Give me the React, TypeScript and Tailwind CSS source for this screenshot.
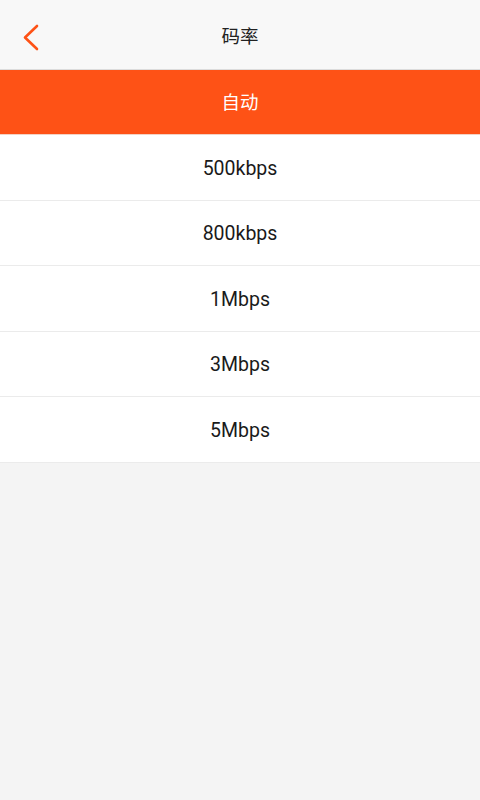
import React from "react";

const items = ["500kbps", "800kbps", "1Mbps", "3Mbps", "5Mbps"];

export default function App() {
  return (
    <div
      className="w-[480px] h-[800px] bg-[#f4f4f4] flex flex-col"
      style={{ fontFamily: 'Roboto, "Noto Sans CJK SC", sans-serif' }}
    >
      <div className="relative h-[70px] bg-[#f8f8f8] border-b border-[#dcdcdc] flex items-center justify-center shrink-0">
        <svg
          className="absolute left-[20px] top-[22px]"
          width="24"
          height="30"
          viewBox="0 0 24 30"
          fill="none"
        >
          <path
            d="M17 4 L5 15.5 L17 27"
            stroke="#fe5216"
            strokeWidth="2.6"
            strokeLinecap="round"
            strokeLinejoin="round"
          />
        </svg>
        <span className="text-[18.5px] text-[#222222] leading-none pt-[6px]">码率</span>
      </div>
      <div className="h-[65px] bg-[#fe5216] border-b border-[#f3d2c4] flex items-center justify-center shrink-0">
        <span className="text-[18.5px] text-white leading-none pt-[2px]">自动</span>
      </div>
      {items.map((t) => (
        <div
          key={t}
          className="h-[65.5px] bg-white border-b border-[#ebebeb] flex items-center justify-center shrink-0"
        >
          <span className="text-[19.5px] text-[#1a1a1a] leading-none pt-[2px]">{t}</span>
        </div>
      ))}
    </div>
  );
}
